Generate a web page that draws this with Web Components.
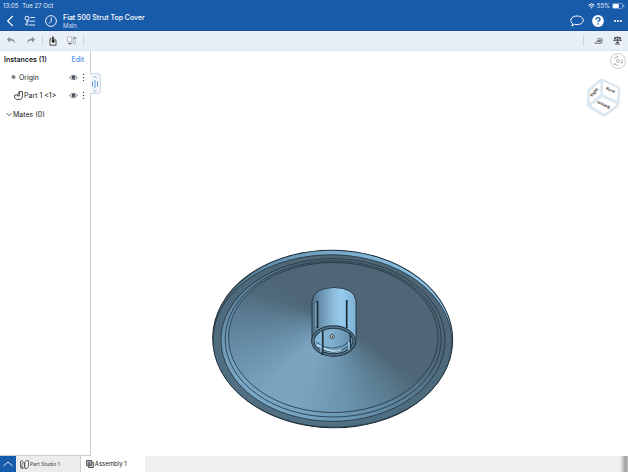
<!DOCTYPE html>
<html lang="en">
<head>
<meta charset="utf-8">
<title>Fiat 500 Strut Top Cover</title>
<style>
html,body{height:100%;margin:0}
body{font-family:Inter,"Liberation Sans",sans-serif;background:#fff;color:#222}
</style>
</head>
<body>
<cad-app></cad-app>
<script>
const base = `<style>
*{box-sizing:border-box}
button{font:inherit;color:inherit;background:none;border:0;padding:0;margin:0;display:flex;align-items:center;justify-content:center;cursor:pointer}
svg{display:block;flex:none}
</style>`;
function define(name, html){
  const t = document.createElement('template');
  t.innerHTML = base + html;
  customElements.define(name, class extends HTMLElement{
    constructor(){ super(); this.attachShadow({mode:'open'}).append(t.content.cloneNode(true)); }
  });
}

define('status-bar', `<style>
:host{display:flex;justify-content:space-between;align-items:center;height:11px;padding:0 3px;font-size:6px;line-height:8px;color:#e6f0fb}
div{display:flex;align-items:center;gap:4px}
.r{gap:2px}
</style>
<div><span>13:05</span><span>Tue 27 Oct</span></div>
<div class="r">
<svg width="7" height="6" viewBox="0 0 7 6" fill="none" stroke="#fff"><path d="M.4 2.2Q3.5-.7 6.6 2.2M1.6 3.5Q3.5 1.7 5.4 3.5"/><circle cx="3.5" cy="4.7" r=".7" fill="#fff" stroke="none"/></svg>
<span>55%</span>
<svg width="13" height="6" viewBox="0 0 13 6"><rect x=".4" y=".4" width="10.4" height="5.2" rx="1.5" fill="none" stroke="#9dbce0" stroke-width=".7"/><rect x="1" y="1" width="5.8" height="4" rx=".8" fill="#fff"/><path d="M11.8 2v2" stroke="#9dbce0"/></svg>
</div>`);

define('title-bar', `<style>
:host{display:flex;align-items:center;height:19px;padding:0 4px 0 6px;color:#fff}
.left{display:flex;align-items:center;gap:10px;flex:1}
.right{display:flex;align-items:center;gap:8px}
.t{margin-left:-4px}
</style>
<div class="left">
<button aria-label="Back"><svg width="8" height="12" viewBox="0 0 8 12" fill="none" stroke="#fff" stroke-width="1.1"><path d="M6.8 1 1.6 6l5.2 5"/></svg></button>
<button aria-label="Feature list"><svg width="11" height="12" viewBox="0 0 11 12" fill="none" stroke="#fff" stroke-width=".9"><circle cx="3" cy="3.2" r="2"/><path d="M3 5.2v5.3M3 7.2 5 5.5M1 9.2h2M6.3 2.5H11M5.5 6.2H11M4.6 10H11"/></svg></button>
<button aria-label="History"><svg width="12" height="12" viewBox="0 0 12 12" fill="none" stroke="#fff" stroke-width=".9"><circle cx="6" cy="6" r="5.4"/><path d="M6.3 2.5v3.7L4.1 8.6"/></svg></button>
<div class="t"><slot></slot></div>
</div>
<div class="right">
<button aria-label="Comments"><svg width="14" height="12" viewBox="0 0 14 12" fill="none" stroke="#fff" stroke-width="1"><path d="M2.8 8.8C-.8 6.5.4 1 7 1c8.2 0 8.5 8.6 0 8.6-1 0-1.6-.1-2.3-.3L1.8 11Z"/></svg></button>
<button aria-label="Help"><svg width="12" height="12" viewBox="0 0 12 12"><circle cx="6" cy="6" r="5.9" fill="#fff"/><path d="M4.1 4.7C4.1 2 8 2.1 8 4.4 8 5.8 6 5.7 6 7.3M6 8.2v1.4" fill="none" stroke="#195bab" stroke-width="1.4"/></svg></button>
<button aria-label="More"><svg width="12" height="12" viewBox="0 0 12 12" fill="#fff"><circle cx="3" cy="6" r="1.1"/><circle cx="6" cy="6" r="1.1"/><circle cx="9" cy="6" r="1.1"/></svg></button>
</div>`);

define('tool-bar', `<style>
:host{display:flex;align-items:center;justify-content:space-between;height:20px;padding:0 6px;background:#e8eff8;border-bottom:1px solid #e1e7ef}
div{display:flex;align-items:center;gap:10px}
i{width:1px;height:11px;background:#ccd5e2}
.g{gap:6px}
.r{gap:10px}
</style>
<div class="g"><div>
<button aria-label="Undo"><svg width="10" height="9" viewBox="0 0 10 9"><path d="M4 .8.8 3.6 4 6.4V4.6Q8 4.2 8.8 7.8 9.4 2.9 4 2.6Z" fill="#8b9097"/></svg></button>
<button aria-label="Redo"><svg width="10" height="9" viewBox="0 0 10 9"><path d="M6 .8 9.2 3.6 6 6.4V4.6Q2 4.2 1.2 7.8.6 2.9 6 2.6Z" fill="#8b9097"/></svg></button>
</div><i></i><div>
<button aria-label="Insert"><svg width="8" height="10" viewBox="1 0 8 10"><path d="M2 2.7h1.8M6 2.7l2 1.6v4.9H2V2.7" fill="#fff" stroke="#333" stroke-width=".9"/><path d="M4.2.6h1.4l.3 4h1.6L5.2 7.4 3 4.6h1.2Z" fill="#222"/></svg></button>
<button aria-label="Mate"><svg width="10" height="9" viewBox="0 0 10 9" fill="#fff" stroke="#9a9fa6" stroke-width=".7"><path d="M.5 1h4.2v4.8H.5ZM6.4 1h1.8v6.8H6.4Z"/><path d="M1 7.6h4M2.5 6.6v2M6 2.2h3.4" stroke="#555"/></svg></button>
</div><i></i></div>
<div class="r"><i></i>
<button aria-label="Section view"><svg width="9" height="8" viewBox="0 0 9 8"><path d="M.6 5.2 3.4 4V1.8L6 .8l2.4.8v3.8L5.8 7 .6 6.8Z" fill="#71767c"/><path d="M1.4 5.6H5L7.6 4M4.2 2.6 7.6 2" stroke="#fff" stroke-width=".8" fill="none"/></svg></button>
<button aria-label="Mass properties"><svg width="9" height="9" viewBox="0 0 9 9" fill="none" stroke="#333" stroke-width=".8"><path d="M4.5.3v7M1 1.6h7M2.2 1.8.8 4.6h2.9ZM6.8 1.8 5.4 4.6h2.9ZM2 8h5M3 6.6h3"/></svg></button>
</div>`);

define('tree-row', `<style>
:host{display:flex;align-items:center;height:18px;padding:0 4px 0 9px;font-size:7px;line-height:9px;color:#222}
:host([part-row]){padding-left:14px}
.n{flex:1;display:flex;align-items:center;gap:2px;white-space:nowrap}
:host([part-row]) .n{gap:1px}
.a{display:flex;align-items:center;gap:3px}
</style>
<div class="n"><slot name="icon"></slot><slot></slot></div>
<div class="a">
<button aria-label="Toggle visibility"><svg width="9" height="7" viewBox="0 0 9 7"><path d="M.5 3.5Q4.5-1 8.5 3.5 4.5 8 .5 3.5Z" fill="#fff" stroke="#59626c" stroke-width=".8"/><circle cx="4.5" cy="3.4" r="1.8" fill="#4a545f"/></svg></button>
<button aria-label="Row menu"><svg width="5" height="9" viewBox="0 0 5 9" fill="#444"><circle cx="2.5" cy="1.4" r=".7"/><circle cx="2.5" cy="4.5" r=".7"/><circle cx="2.5" cy="7.6" r=".7"/></svg></button>
</div>`);

define('instance-panel', `<style>
:host{display:block;position:relative;z-index:1;width:91px;flex:none;background:#fff;border-right:1px solid #c9cfd8;border-bottom:1px solid #c9ced5}
header{display:flex;justify-content:space-between;align-items:center;height:17px;padding:0 6px 0 4px;font-size:7px;line-height:9px}
h2{font-size:7px;font-weight:600;margin:0}
.edit{color:#1e7be0}
.m{font-size:7px;line-height:9px;height:20px;padding-left:6px;gap:1px}
.handle{position:absolute;left:100%;top:22px;width:11px;height:21px;border-radius:0 4px 4px 0;background:#f2f5f9;border:1px solid #d3d8df;border-left:0}
</style>
<header><h2>Instances (1)</h2><button class="edit">Edit</button></header>
<tree-row><svg slot="icon" width="8" height="8" viewBox="0 0 8 8"><circle cx="4.5" cy="4" r="1.8" fill="#999" stroke="#999" stroke-width=".7"/><circle cx="4.5" cy="4" r=".7" fill="#333"/></svg><span>Origin</span></tree-row>
<tree-row part-row><svg slot="icon" width="9" height="9" viewBox="0 0 9 9" fill="#fff" stroke="#333" stroke-width=".9"><path d="M.6 4.2h1.6q2 0 2-1.8L5.4.6h3v5.6L6.6 8.4H2.2L.6 6.8ZM5.4.6v4.2H2.9"/></svg><span>Part 1 &lt;1&gt;</span></tree-row>
<button class="m"><svg width="6" height="5" viewBox="0 0 6 5" fill="none" stroke="#333" stroke-width=".8"><path d="m.6 1 2.4 2.6L5.4 1"/></svg>Mates (0)</button>
<button class="handle" aria-label="Resize panel"><svg width="8" height="18" viewBox="0 0 8 18" fill="none" stroke="#5e9add" stroke-width="1"><path d="m2.4 2.8 1.6-1.5 1.6 1.5M2.4 15.2 4 16.7l1.6-1.5" stroke-width=".7"/><path d="M4 5v8M1.5 6.5v5M6.5 6.5v5"/></svg></button>`);

define('view-controls', `<style>
:host{position:absolute;top:2px;right:2px;display:flex;flex-direction:column;align-items:flex-end;gap:8px}
.c{margin-right:5px}
text{font-size:4px;font-weight:600;fill:#333;text-anchor:middle}
</style>
<button aria-label="Rotate view"><svg width="16" height="16" viewBox="0 0 15 15" fill="none" stroke="#9da2a8" stroke-width=".7"><circle cx="7.5" cy="7.5" r="7" stroke="#b6babf"/><path d="M4 5.5Q5 3.6 7.2 3.5M6.2 2.5l1.2 1-1.2 1.1M11.2 5.7q.8 2-.3 3.8M12 8.8l-1.2.9-.7-1.3M8.3 11.4Q6 12 4.2 10.2M4 11.6l-.1-1.5 1.5.1"/><circle cx="7.5" cy="7.5" r="1.4"/></svg></button>
<svg class="c" width="35" height="41" viewBox="0 0 35 41" role="img" aria-label="View cube">
<path d="M16.5 1.5 33 9.5q1.5 1 1.4 2.4L33.4 28q-.1 1.2-1.2 2L19.6 39.4q-1.2.8-2.4.1L2 30.2Q.8 29.4.9 28L1.6 13q0-1 .9-1.7L14.6 1.7q1-.7 1.9-.2Z" fill="#dce7f0"/>
<path d="M14.3 5.8v11q0 .8-.7 1.3L4.8 25.5q-1.2.9-1.2-.6l.6-10.6q0-.8.7-1.3l8-6.9q1.4-1.2 1.4-.3ZM18.8 5.2 31 11q1 .6.9 1.6l-.6 9.6q-.1 1.7-1.5 1L18 18q-1-.4-1-1.4V6.2q0-1.7 1.8-1ZM17.6 21 29.8 26.5q1.4.7.2 1.7L19.6 36q-1.1.8-2.3.1L6.2 29.5q-1.4-.8-.2-1.8l8.7-6.5q1.3-.9 2.9-.2Z" fill="#fff"/>
<text transform="translate(9.2 16.2) rotate(-50)">Right</text>
<text transform="translate(24 14.3) rotate(24)">Back</text>
<text transform="translate(18 26.6) rotate(206)">Bottom</text>
</svg>`);

define('model-view', `<style>
:host{display:block;flex:1;min-width:0;position:relative;background:#fff}
.s{width:100%;height:100%}
.cone{width:100%;height:100%;border-radius:50%;background:conic-gradient(from 0deg at 50% 38%,#4e6675 0deg,#4e6675 124deg,#597a8e 142deg,#6b93ad 170deg,#7ba4c0 205deg,#7aa3be 225deg,#668ca5 255deg,#5c7d93 272deg,#4f6a7a 290deg,#4e6675 305deg)}
</style>
<svg class="s" viewBox="91 51 537 405" role="img" aria-label="Strut top cover model">
<defs>
<linearGradient id="rim" x1="0" y1=".1" x2="1" y2=".1"><stop offset="0" stop-color="#425e70"/><stop offset=".25" stop-color="#6492b0"/><stop offset=".6" stop-color="#7db2d3"/><stop offset="1" stop-color="#8dc7ed"/></linearGradient>
<linearGradient id="face" x1=".3" y1="1" x2=".65" y2=".1"><stop offset="0" stop-color="#527186"/><stop offset=".5" stop-color="#4d6a7c"/><stop offset="1" stop-color="#4e6675"/></linearGradient>
<linearGradient id="groove" x1=".2" y1=".9" x2=".7" y2=".35"><stop offset="0" stop-color="#79a8c7"/><stop offset=".5" stop-color="#5c849e"/><stop offset="1" stop-color="#4e6676"/></linearGradient>
<linearGradient id="cyl" x1="0" x2="1"><stop offset="0" stop-color="#4d6d81"/><stop offset=".15" stop-color="#628aa5"/><stop offset=".5" stop-color="#8ebede"/><stop offset=".68" stop-color="#97cbed"/><stop offset="1" stop-color="#7db0d2"/></linearGradient>
<linearGradient id="bore" x1="0" x2="1"><stop offset="0" stop-color="#86b9da"/><stop offset=".45" stop-color="#7fb0d0"/><stop offset="1" stop-color="#5f89a4"/></linearGradient>
</defs>
<ellipse cx="332.7" cy="339" rx="120" ry="88.8" fill="url(#rim)" stroke="#1d2b34" transform="rotate(1 332.7 339)"/>
<g stroke="#22323d" stroke-width=".8">
<ellipse cx="332.5" cy="341" rx="119.5" ry="86.2" fill="url(#face)" transform="rotate(1 332.5 341)"/>
<ellipse cx="333" cy="340" rx="112" ry="81.3" fill="url(#groove)"/>
<ellipse cx="333.2" cy="339" rx="108" ry="78" fill="url(#groove)"/>
</g>
<foreignObject x="228.5" y="262.5" width="209.6" height="150"><div class="cone"></div></foreignObject>
<ellipse cx="333.3" cy="337.5" rx="104.8" ry="75" fill="none" stroke="#22323d" stroke-width=".8"/>
<path d="M312 341V301Q313 288 334 287.5 355 288 356 301V341A22 15 0 0 1 312 341Z" fill="url(#cyl)" stroke="#22323d" stroke-width=".9"/>
<ellipse cx="333.5" cy="341" rx="21" ry="14.2" fill="url(#bore)"/>
<path d="M316 342Q332 355 351 341M318 347Q333 358 349 346" fill="none" stroke="#294250" stroke-width=".8"/>
<path d="M317 345Q332 354 341 350" fill="none" stroke="#cfe9f6" stroke-width="1.1"/>
<ellipse cx="333.5" cy="341" rx="20.6" ry="14" fill="none" stroke="#22323d" stroke-width="3.4"/>
<ellipse cx="333.5" cy="341" rx="20.6" ry="14" fill="none" stroke="#55788e" stroke-width="1.6"/>
<path d="M317.4 301v27M346.8 300v28" stroke="#182a35" stroke-width="1.8"/>
<path d="M316 303v24M348.2 302v25" stroke="#8fbdd9" stroke-width=".8"/>
<path d="M322.6 330.5V355" stroke="#20333f" stroke-width="2"/>
<path d="M321 331.5V352" stroke="#91bfdd" stroke-width="1.2"/>
<path d="M350.3 333v16" stroke="#20333f" stroke-width="1.4"/>
<path d="M349 342v8" stroke="#a4d1ec" stroke-width="1.4"/>
<circle cx="332.3" cy="336.5" r="2" fill="#d8e3e8" stroke="#222" stroke-width=".8"/><circle cx="332.3" cy="336.5" r=".7" fill="#222"/>
</svg>
<view-controls></view-controls>`);

define('doc-tab', `<style>
:host{display:flex;background:#ececec;border-right:1px solid #ccc}
:host([selected]){background:#fff;border-color:#fff}
button{justify-content:flex-start;gap:1px;padding:0 20px 0 4px;font-size:5px;font-weight:500;line-height:8px;color:#555;white-space:nowrap}
:host([selected]) button{padding:0 17px 0 5px;font-size:6px;font-weight:400;color:#222}
</style><button><slot name="icon"></slot><slot></slot></button>`);

define('tab-bar', `<style>
:host{display:flex;height:16px;background:#efefef}
.up{width:16px;background:#195bab}
.fill{flex:1}
.edge{width:8px;background:linear-gradient(90deg,#efefef,#999 75%,#ccc)}
</style>
<button class="up" aria-label="Show tabs"><svg width="10" height="6" viewBox="0 0 10 6" fill="none" stroke="#fff" stroke-width=".9"><path d="m.5 5 4.5-4 4.5 4"/></svg></button>
<doc-tab><svg slot="icon" width="9" height="9" viewBox="0 0 9 9" fill="#f5f5f5" stroke="#444" stroke-width=".8"><path d="M3 .8H1.8Q.5.8.5 2v5Q.5 8.3 1.8 8.3H3M2 3.4l1-.9h1.4v4.7l-.9.9H2ZM4.8 2.4 6.2.7h2.3v6L7.1 8.4H4.8Z"/></svg>Part Studio 1</doc-tab>
<doc-tab selected><svg slot="icon" width="8" height="8" viewBox="0 0 8 8" fill="#ddd" stroke="#333" stroke-width=".8"><path d="M2.4 5.8v1.7h5V2.2H5.8"/><path d="M.5.5h5.2v5.2H.5ZM1.6 2h3M1.6 3.2h3M1.6 4.4h3"/></svg>Assembly 1</doc-tab>
<div class="fill"></div><div class="edge"></div>`);

define('cad-app', `<style>
:host{display:flex;flex-direction:column;min-height:100vh}
.top{background:#195bab;border-bottom:1px solid #154f98}
main{display:flex;flex:1;min-height:0}
h1{font-size:7px;line-height:9px;font-weight:500;margin:0}
p{font-size:6px;line-height:7px;margin:0;color:#c9dcf3}
</style>
<div class="top"><status-bar></status-bar><title-bar><h1>Fiat 500 Strut Top Cover</h1><p>Main</p></title-bar></div>
<tool-bar></tool-bar>
<main><instance-panel></instance-panel><model-view></model-view></main>
<tab-bar></tab-bar>`);
</script>
</body>
</html>
